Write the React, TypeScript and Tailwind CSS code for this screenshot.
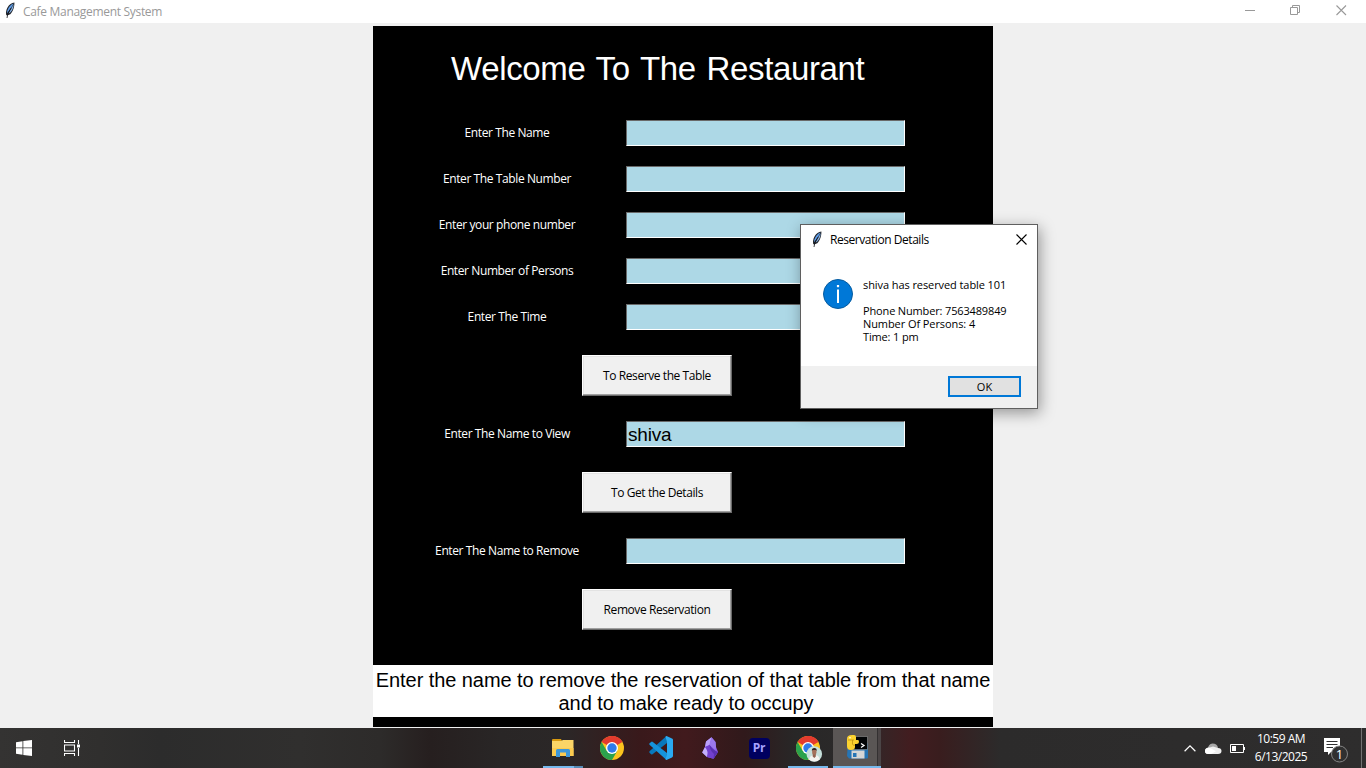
import React from "react";

const FeatherIcon = () => (
  <svg width="12" height="17" viewBox="0 0 12 17" className="mb-px shrink-0">
    <path d="M10.4 0.600C7.800 1 5 2.800 3.500 5.600C2.200 8 1.700 10.500 2.200 13L3 13.500L6.300 12.300C8.800 10 10.600 5.500 10.400 0.600Z" fill="#202329" />
    <path d="M9.600 1.600C6.800 2.600 4.600 5 3.400 8.400L3 11.500L7.200 5.600Z" fill="#5e9dea" />
    <path d="M9.600 2.200L4.600 11.500L6 10.800C8.300 8.700 9.700 5.500 9.600 2.200Z" fill="#86b2e4" />
    <path d="M7.200 6L4 11L3 16" stroke="#111318" strokeWidth=".8" fill="none" />
  </svg>
);

const Field = ({ label, value = "" }: { label: string; value?: string }) => (
  <div className="flex h-[26px] items-center">
    <div className="w-[253px] whitespace-nowrap pl-[15px] text-center font-['Open_Sans','Noto_Sans',sans-serif] text-[12px] leading-4 tracking-[-0.4px] text-white">
      {label}
    </div>
    <div className="h-[26px] w-[279px] overflow-hidden border border-b-white border-l-[#696969] border-r-white border-t-[#696969] bg-[#add8e6] pl-px text-[19px] leading-[26px] tracking-[-0.2px] text-black">
      {value}
    </div>
  </div>
);

const FormButton = ({ label }: { label: string }) => (
  <button className="ml-[209px] flex h-[41px] w-[150px] items-center justify-center border border-b-[#696969] border-l-white border-r-[#696969] border-t-white bg-[#f0f0f0] font-['Open_Sans','Noto_Sans',sans-serif] text-[12px] leading-4 tracking-[-0.42px] text-black shadow-[inset_-1px_-1px_0_#a0a0a0,inset_1px_1px_0_#e3e3e3]">
    {label}
  </button>
);

const FolderIcon = () => (
  <svg width="22" height="20" viewBox="0 0 22 20">
    <path d="M0 2Q0 1 1 1H9L10 3H0Z" fill="#d99a10" />
    <path d="M0 3H9L11 2H21.500V18H0Z" fill="#fbd567" />
    <path d="M0 10H21.500V18H0Z" fill="#fccb4f" />
    <path d="M4 19V12.500Q4 11 5.500 11H16.500Q18 11 18 12.500V19H14V14.500H8V19Z" fill="#3d97d9" />
  </svg>
);

const ChromeIcon = () => (
  <svg width="24" height="24" viewBox="0 0 24 24">
    <circle cx="12" cy="12" r="12" fill="#fcc31e" />
    <path d="M12 12L1.600 6A12 12 0 0 1 22.400 6Z" fill="#e33b2e" />
    <path d="M12 6H22.400A12 12 0 0 0 12 0Z" fill="#e33b2e" />
    <path d="M1.600 6A12 12 0 0 0 12 24L17.200 15L6.800 15Z" fill="#2ba24c" />
    <circle cx="12" cy="12" r="6" fill="#fff" />
    <circle cx="12" cy="12" r="4.700" fill="#2f7bea" />
  </svg>
);

const ChromeProfileIcon = () => (
  <svg width="27" height="26" viewBox="0 0 27 26">
    <circle cx="12" cy="12" r="12" fill="#fcc31e" />
    <path d="M12 12L1.600 6A12 12 0 0 1 22.400 6Z" fill="#e33b2e" />
    <path d="M12 6H22.400A12 12 0 0 0 12 0Z" fill="#e33b2e" />
    <path d="M1.600 6A12 12 0 0 0 12 24L17.200 15L6.800 15Z" fill="#2ba24c" />
    <circle cx="12" cy="12" r="6" fill="#fff" />
    <circle cx="12" cy="12" r="4.700" fill="#2f7bea" />
    <circle cx="18.300" cy="18" r="7.800" fill="#c5dfda" />
    <path d="M13 23.500Q14 19.500 17 19.200H20Q23.500 20 23.700 23.500A8 8 0 0 1 13 23.500Z" fill="#f4f3f0" />
    <path d="M16.700 17H19.800V20.500L18.300 22L16.700 20.500Z" fill="#916350" />
    <ellipse cx="18.300" cy="15.700" rx="2.200" ry="3" fill="#a5715b" />
    <path d="M15.900 15Q15.500 12 18.300 12Q21 12 20.700 15L19.800 14H16.800Z" fill="#30211e" />
  </svg>
);

const VSCodeIcon = () => (
  <svg width="24" height="24" viewBox="0 0 24 24">
    <path d="M17.500 0L18 7L3.500 18.300Q2.800 18.800 2.200 18.200L0.500 16.700Q0 16 0.500 15.300Z" fill="#0878bd" />
    <path d="M2.200 5.900Q2.800 5.300 3.500 5.800L18 17L17.500 24L0.500 8.700Q0 8 0.500 7.300Z" fill="#1593dc" />
    <path d="M17.500 0L23 2.600Q24 3.100 24 4V20Q24 20.900 23 21.400L17.500 24Q16.800 23.900 16.500 23.200L18 17.500V6.500L16.500 .8Q16.800 .1 17.500 0Z" fill="#2aaaf2" />
  </svg>
);

const ObsidianIcon = () => (
  <svg width="17" height="22" viewBox="0 0 17 22">
    <path d="M9.500 .3L4 4.600L3 10L0.200 15.500L5 20L11.500 21.800L16 15L14 10L13.500 5Z" fill="#8b5de8" />
    <path d="M9.500 .3L4 4.600L3 10L7.500 8Z" fill="#b9a1fa" />
    <path d="M9.500 .3L7.500 8L13.500 13L14 10L13.500 5Z" fill="#9b78ed" />
    <path d="M3 10L.200 15.500L5 20Q7 14 3 10Z" fill="#c4b1fb" />
    <path d="M7.500 8L3 10Q7 14 5 20L11.500 21.800L16 15Q12 14 7.500 8Z" fill="#7140cf" />
    <path d="M7.500 8Q8 14 12 17L11.500 21.800L16 15Q12 14 7.500 8Z" fill="#5930b1" />
  </svg>
);

const IdleIcon = () => (
  <svg width="23" height="24" viewBox="0 0 23 24">
    <path d="M2 8H22V22.500Q22 23.500 21 23.500H3L1 21Z" fill="#2675b5" />
    <path d="M5.500 15.500H18.500V23.500H5.500Z" fill="#d5d6d6" />
    <path d="M7 18H10.500V22H7Z" fill="#2675b5" />
    <path d="M2 1.500H21.500V14.500H2Z" fill="#020406" stroke="#a6a6a6" strokeWidth=".5" />
    <path d="M1 4Q1 0 6 0H8Q10 0 10 2V5H12Q13 5 13 7Q13 9 10.500 9H9V12Q9 15 5 15Q1 15 1 11Z" fill="#fbd22f" />
    <path d="M2 5H8M6.500 5V9Q7 11 9 10" fill="none" stroke="#b78c0b" strokeWidth=".7" />
    <circle cx="4" cy="2.700" r=".8" fill="#fff" />
    <path d="M15 8.500L18 10.500L15 12.500" fill="none" stroke="#fff" strokeWidth="1.300" />
  </svg>
);

const PremiereIcon = () => (
  <div className="flex h-[21px] w-[21px] items-center justify-center rounded-[4px] bg-[#00005f] font-['Open_Sans',sans-serif] text-[12px] font-bold leading-none tracking-[-0.3px] text-[#a6a2ff]">
    Pr
  </div>
);

const TaskItem = ({ children, open = false }: { children: React.ReactNode; open?: boolean }) => (
  <div className={open ? "flex h-10 w-10 items-center justify-center border-b-2 border-[#76b9ed] pt-0.5" : "flex h-10 w-10 items-center justify-center"}>
    {children}
  </div>
);

const TitleBar = () => (
  <header className="flex h-[23px] shrink-0 items-start bg-white">
    <div className="flex items-center pl-1 pt-[2px]">
      <FeatherIcon />
      <span className="pl-[7px] font-['Open_Sans','Noto_Sans',sans-serif] text-[12px] leading-[17px] tracking-[-0.31px] text-[#999]">
        Cafe Management System
      </span>
    </div>
    <div className="ml-auto flex gap-[35px] pr-[19px] pt-[5px]">
      <svg width="10" height="11" viewBox="0 0 10 11"><path d="M0 5.500H10" stroke="#999" /></svg>
      <svg width="11" height="11" viewBox="0 0 11 11" fill="none" stroke="#999">
        <path d="M.5 2.500H7.500V9.500H.500ZM2.500 2.500V.500H9.500V7.500H7.500" />
      </svg>
      <svg width="11" height="11" viewBox="0 0 11 11"><path d="M.5 .500L10 10M10 .500L.500 10" stroke="#999" strokeWidth="1.100" /></svg>
    </div>
  </header>
);

const Dialog = () => (
  <section className="absolute left-[800px] top-[224px] flex h-[185px] w-[238px] flex-col border border-[#5f5f5f] bg-white font-['Open_Sans','Noto_Sans',sans-serif] text-black shadow-[2px_4px_14px_rgba(0,0,0,0.38)]">
    <div className="flex h-[30px] items-center pl-[10px] pr-[10px]">
      <FeatherIcon />
      <span className="pl-[7px] text-[12px] leading-4 tracking-[-0.45px]">Reservation Details</span>
      <svg width="11" height="11" viewBox="0 0 11 11" className="mb-[2px] ml-auto"><path d="M.5 .500L10.500 10.500M10.500 .500L.500 10.500" stroke="#000" strokeWidth="1.100" /></svg>
    </div>
    <div className="flex flex-1 gap-[10px] pl-[22px] pt-6">
      <svg width="30" height="30" viewBox="0 0 30 30" className="shrink-0">
        <circle cx="15" cy="15" r="14.500" fill="#0078d7" stroke="#075b9f" />
        <path d="M15 10.500V24" stroke="#fff" strokeWidth="2" />
        <path d="M13.900 6H16.100V8.200H13.900Z" fill="#fff" />
      </svg>
      <div className="-mt-px whitespace-nowrap text-[11px] leading-[13px] tracking-[-0.08px]">
        <p>shiva has reserved table 101</p>
        <p className="pt-[13px] tracking-[-0.15px]">Phone Number: 7563489849</p>
        <p>Number Of Persons: 4</p>
        <p className="tracking-[-0.15px]">Time: 1 pm</p>
      </div>
    </div>
    <div className="flex h-[42px] justify-end bg-[#f0f0f0] pr-4 pt-[10px]">
      <button className="flex h-[21px] w-[73px] items-center justify-center border-2 border-[#0078d7] bg-[#e1e1e1] text-[11px] leading-none">OK</button>
    </div>
  </section>
);

const Taskbar = () => (
  <footer className="flex h-10 shrink-0 bg-[linear-gradient(90deg,#343332_0px,#302f2e_100px,#2c2c2c_160px,#302f2e_300px,#2d2b2a_380px,#261f1f_430px,#292626_500px,#2b2727_565px,#39191b_640px,#411a1d_685px,#30191b_745px,#282727_795px,#2c2a2a_860px,#421d20_910px,#391d1e_940px,#2c2b2b_1000px,#2e2d2d_1366px)] text-white">
    <div className="flex w-[543px] items-center gap-8 pl-4">
      <svg width="16" height="16" viewBox="0 0 16 16" fill="#fff"><path d="M0 2.200L6.500 1.200V7.500H0ZM7.300 1L16 0V7.500H7.300ZM0 8.300H6.500V14.700L0 13.800ZM7.300 8.300H16V16L7.300 14.900Z" /></svg>
      <svg width="16" height="16" viewBox="0 0 16 16" fill="none" stroke="#fff"><path d="M.5 0V2.500H10.500V0M.5 16V13.500H10.500V16M.5 5V11H10.500V5ZM14.500 0V4M14.500 8V16" strokeWidth="1.100" /><path d="M13 4.500H16V7.500H13Z" fill="#fff" stroke="none" /></svg>
    </div>
    <div className="flex gap-[9px]">
      <div className="flex h-10 w-10 items-center justify-center bg-[linear-gradient(90deg,#76b9ed_31px,#568bb5_31px)] bg-[length:100%_2px] bg-bottom bg-no-repeat"><FolderIcon /></div>
      <TaskItem><ChromeIcon /></TaskItem>
      <TaskItem><VSCodeIcon /></TaskItem>
      <TaskItem><ObsidianIcon /></TaskItem>
      <TaskItem><PremiereIcon /></TaskItem>
      <TaskItem open><div className="pl-[3px] pt-px"><ChromeProfileIcon /></div></TaskItem>
    </div>
    <div className="ml-[5px] flex h-10 w-12 border-b-2 border-[#76b9ed]">
      <div className="flex w-11 items-center justify-center bg-[#5a5655] pl-1"><IdleIcon /></div>
      <div className="flex-1 border-l border-[#343132] bg-[#4b4546]" />
    </div>
    <div className="ml-auto flex items-center">
      <svg width="12" height="7" viewBox="0 0 12 7" className="mr-[9px]"><path d="M.6 6.200L6 .900L11.400 6.200" fill="none" stroke="#fff" strokeWidth="1.200" /></svg>
      <svg width="17" height="11" viewBox="0 0 17 11" className="mr-[8px]"><path d="M3 6Q3 1 7.500 .500Q12 .500 13 4.500L8 9Z" fill="#a7a7a7" /><path d="M3.500 11Q0 11 0 8.200Q0 5.500 3 5L8 3.500L13 5Q16.500 5.200 16.500 8Q16.500 11 13 11Z" fill="#eee" /><path d="M0 8Q0 4.500 4 4.500L11 8.200L6 11H3.500Q0 11 0 8Z" fill="#fff" /></svg>
      <svg width="16" height="9" viewBox="0 0 16 9" className="mr-[8px]"><path d="M.5 .500H13.500V8.500H.500ZM14.500 3V6" fill="none" stroke="#fff" /><path d="M2 2H6V7H2Z" fill="#fff" /></svg>
      <div className="w-[54px] text-center font-['Open_Sans','Noto_Sans',sans-serif] text-[12px] leading-[18px] tracking-[-0.5px]"><p>10:59 AM</p><p>6/13/2025</p></div>
      <svg width="26" height="26" viewBox="0 0 26 26" className="ml-[15px] mt-1">
        <path d="M1 1H17V15H8L5 18V15H1Z" fill="#fff" />
        <path d="M3.500 4.500H14.500M3.500 7.500H14.500M3.500 10.500H10" stroke="#303030" />
        <circle cx="16.500" cy="17" r="8" fill="#303030" stroke="#858585" />
        <text x="16.500" y="21.500" textAnchor="middle" fill="#fff" fontFamily="Open Sans" fontSize="13">1</text>
      </svg>
      <div className="ml-[12px] h-10 w-[5px] border-l border-[#717171]" />
    </div>
  </footer>
);

export default function App() {
  return (
    <div className="relative flex h-[768px] w-[1366px] flex-col overflow-hidden bg-[#f0f0f0] font-['Liberation_Sans',Arial,sans-serif]">
      <TitleBar />
      <main className="flex flex-1 justify-center pb-px pt-[3px]">
        <div className="h-[701px] w-[620px] bg-black">
          <h1 className="h-[94px] whitespace-nowrap pl-[78px] pt-[23px] text-[33px] leading-[40px] tracking-[-0.36px] text-white [word-spacing:2px]">Welcome To The Restaurant</h1>
          <div className="flex flex-col gap-5">
            <Field label="Enter The Name" />
            <Field label="Enter The Table Number" />
            <Field label="Enter your phone number" />
            <Field label="Enter Number of Persons" />
            <Field label="Enter The Time" />
          </div>
          <div className="flex flex-col gap-[25px] pt-[25px]">
            <FormButton label="To Reserve the Table" />
            <Field label="Enter The Name to View" value="shiva" />
            <FormButton label="To Get the Details" />
            <Field label="Enter The Name to Remove" />
            <FormButton label="Remove Reservation" />
          </div>
          <div className="mt-[35px] h-[52px] whitespace-nowrap bg-white pl-[6px] pt-[4px] text-center text-[20px] leading-[23px] tracking-[-0.07px] text-black">
            <p className="-ml-[6px]">Enter the name to remove the reservation of that table from that name</p>
            <p>and to make ready to occupy</p>
          </div>
        </div>
      </main>
      <Taskbar />
      <Dialog />
    </div>
  );
}
